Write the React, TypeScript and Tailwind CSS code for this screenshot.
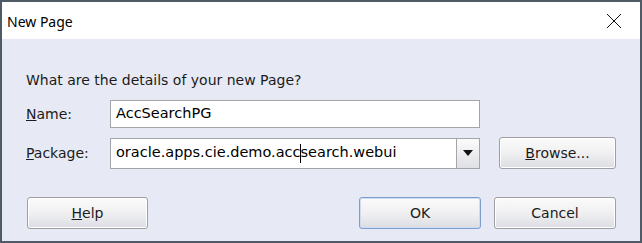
import React from "react";

const ui = { fontFamily: '"DejaVu Sans", "Liberation Sans", sans-serif' };

function Btn({ children, primary, className }: { children: React.ReactNode; primary?: boolean; className?: string }) {
  return (
    <button
      type="button"
      className={`h-[32px] rounded-[3px] border text-[14px] text-[#1b1b1b] bg-gradient-to-b from-[#fbfbfb] via-[#f0f0f2] to-[#dcdde3] ${
        primary ? "border-[#7a9fd0] shadow-[inset_0_0_0_1px_#cddcf1]" : "border-[#9d9fa3] shadow-[inset_0_0_0_1px_#ffffff]"
      } ${className ?? ""}`}
    >
      {children}
    </button>
  );
}

export default function App() {
  return (
    <div className="w-[642px] h-[243px] border-2 border-[#4f5a66] bg-[#e7eaf4] flex flex-col" style={ui}>
      {/* title bar */}
      <div className="h-[37px] bg-white flex items-center justify-between pl-[5px] pr-[18px]">
        <span className="text-[14px] text-black mt-[1px]" style={{ fontFamily: '"Noto Sans", "Open Sans", sans-serif' }}>
          New Page
        </span>
        <svg width="16" height="16" viewBox="0 0 16 16" className="mt-[1px]">
          <path d="M1 1 L15 15 M15 1 L1 15" stroke="#111" strokeWidth="1" fill="none" />
        </svg>
      </div>

      {/* body */}
      <div className="flex-1 flex flex-col pl-[24px] pt-[33px]">
        <div className="text-[14px] leading-[17px] text-[#1b1b1b]">What are the details of your new Page?</div>

        <div className="flex items-center mt-[11px] h-[28px]">
          <label className="w-[84px] text-[14px] text-[#1b1b1b]">
            <span className="underline">N</span>ame:
          </label>
          <div className="w-[370px] h-[28px] bg-white border border-[#a3a5a8] flex items-center px-[5px] text-[14.5px] text-black">
            AccSearchPG
          </div>
        </div>

        <div className="flex items-center mt-[9px] h-[32px]">
          <label className="w-[84px] text-[14px] text-[#1b1b1b]">
            <span className="underline">P</span>ackage:
          </label>
          <div className="w-[370px] h-[31px] bg-white border border-[#a3a5a8] flex items-stretch">
            <div className="flex-1 flex items-center px-[5px] text-[14.5px] text-black whitespace-nowrap overflow-hidden">
              oracle.apps.cie.demo.acc<span className="inline-block w-px h-[19px] bg-black -mx-[0.5px] align-middle" />search.webui
            </div>
            <div className="w-[23px] border-l border-[#a3a5a8] bg-gradient-to-b from-[#fbfbfb] to-[#dfe0e5] flex items-center justify-center">
              <svg width="10" height="6" viewBox="0 0 10 6">
                <path d="M0 0 H10 L5 6 Z" fill="#111" />
              </svg>
            </div>
          </div>
          <Btn className="ml-[19px] w-[117px]">
            <span className="underline">B</span>rowse...
          </Btn>
        </div>

        <div className="flex items-center mt-[28px] pr-[24px]">
          <Btn className="ml-[1px] w-[121px]">
            <span className="underline">H</span>elp
          </Btn>
          <div className="flex-1" />
          <Btn primary className="w-[122px]">
            OK
          </Btn>
          <Btn className="ml-[13px] w-[122px]">Cancel</Btn>
        </div>
      </div>
    </div>
  );
}
